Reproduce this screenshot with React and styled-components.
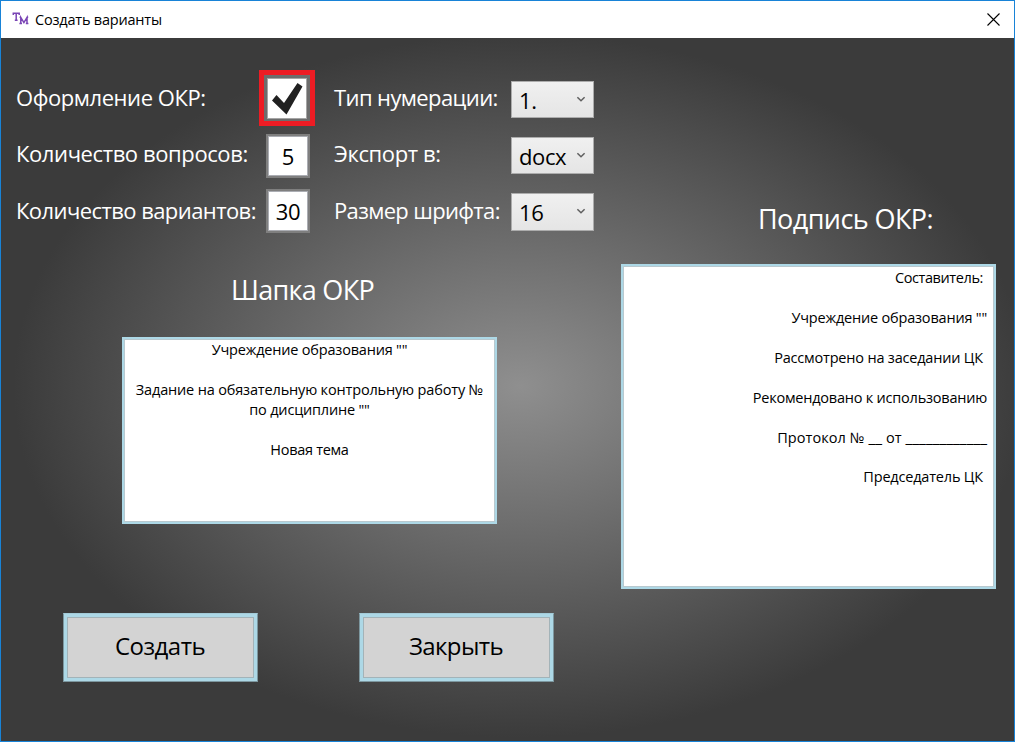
import React from 'react';
import styled, { createGlobalStyle } from 'styled-components';

const GlobalStyle = createGlobalStyle`
  * { box-sizing: border-box; }
  body { margin: 0; font-family: "Open Sans", "Noto Sans", sans-serif; color: #000; }
`;

const Window = styled.div`
  display: flex;
  flex-direction: column;
  width: 1015px;
  height: 742px;
  border: 1px solid #1883d7;
  overflow: hidden;
`;

const TitleBar = styled.header`
  display: flex;
  align-items: center;
  flex: 0 0 37px;
  padding: 0 14px 0 11px;
  background: #fff;
`;

const Title = styled.span`
  flex: 1;
  margin-left: 6px;
  font-size: 14.5px;
  line-height: 20px;
  letter-spacing: -0.2px;
  white-space: nowrap;
`;

const Logo = styled.svg`
  display: block;
  margin-top: -3px;
`;

const Body = styled.main`
  display: flex;
  flex: 1;
  background: radial-gradient(50% 50% at 51.2% 49.5%, #8f8f8f 0%, #3b3b3b 100%);
`;

const LeftPane = styled.div`
  display: flex;
  flex-direction: column;
  width: 620px;
  padding-top: 32px;
`;

const RightPane = styled.div`
  display: flex;
  flex-direction: column;
  padding-top: 162px;
`;

const Settings = styled.div`
  display: grid;
  grid-template-columns: 243px 75px 177px 83px;
  grid-template-rows: 57px 56px 56px;
  padding-left: 15px;
`;

const Label = styled.label`
  padding-top: ${(p) => p.$top}px;
  font-size: 22px;
  line-height: 30px;
  color: #fff;
  white-space: nowrap;
  letter-spacing: ${(p) => p.$track}px;
`;

const CheckFrame = styled.div`
  width: 56px;
  height: 56px;
  border: 5px solid #ed1c24;
  background: #6d6d6d;
`;

const CheckBox = styled.div`
  width: 40px;
  height: 41px;
  margin: 3px 0 0 3px;
  border: 1px solid #a5a5a5;
  background: #fff;
`;

const NumberBox = styled.div`
  width: 44px;
  height: 44px;
  margin: ${(p) => p.$top}px 0 0 7px;
  border: 2px solid #7f7f7f;
  box-shadow: inset 0 0 0 1px #abadb3;
  background: #fff;
  font-size: 22px;
  line-height: 40px;
  text-align: center;
  letter-spacing: -0.3px;
`;

const Select = styled.div`
  display: flex;
  justify-content: space-between;
  width: 83px;
  height: ${(p) => p.$height || 37}px;
  margin-top: ${(p) => p.$top}px;
  padding: 3px 7px 0 7px;
  border: 1px solid #acacac;
  background: linear-gradient(#f0f0f0, #e5e5e5);
  font-size: 22px;
  line-height: 30px;
  letter-spacing: -0.4px;
`;

const Chevron = styled.svg`
  display: block;
  margin-top: 11px;
`;

const Heading = styled.h2`
  margin: ${(p) => p.$top || 0}px 0 0 ${(p) => p.$left}px;
  font-size: 27px;
  font-weight: 400;
  line-height: 38px;
  color: #fff;
  white-space: nowrap;
  letter-spacing: ${(p) => p.$track}px;
`;

const TextPanel = styled.div`
  width: 375px;
  height: ${(p) => p.$height}px;
  margin: ${(p) => p.$top}px 0 0 ${(p) => p.$left}px;
  padding: ${(p) => p.$inset}px 7px 0;
  border: 2px solid #add8e6;
  box-shadow: inset 0 0 0 1px #b9c9cf;
  background: #fff;
  text-align: ${(p) => p.$align};
`;

const Line = styled.p`
  height: ${(p) => p.$height || 20}px;
  margin: 0 ${(p) => p.$end || 0}px 0 0;
  font-size: 14.5px;
  line-height: 20px;
  white-space: nowrap;
  letter-spacing: ${(p) => p.$track ?? -0.19}px;
`;

const Blank = styled.span`
  font-size: 15.5px;
  line-height: 1;
  letter-spacing: 0;
`;

const Actions = styled.div`
  display: flex;
  gap: 101px;
  margin: 89px 0 0 62px;
`;

const Button = styled.button`
  width: 195px;
  height: 69px;
  padding: 0 1px 5px 0;
  border: 1px solid #7d979f;
  border-top-color: #a3cbd8;
  box-shadow: inset 0 0 0 3px #add8e6, inset 0 0 0 4px #a3b3b8;
  background: #d3d3d3;
  font-family: inherit;
  font-size: 24px;
  letter-spacing: ${(p) => p.$track}px;
`;

const Arrow = () => (
  <Chevron width="10" height="7" viewBox="0 0 10 7">
    <path d="M1.4 1.2 L5 4.8 L8.6 1.2" fill="none" stroke="#606060" strokeWidth="1.5" />
  </Chevron>
);

export default function App() {
  return (
    <>
      <GlobalStyle />
      <Window>
        <TitleBar>
          <Logo width="17" height="14" viewBox="0 0 17 14">
            <g fill="none" stroke="#7a45b5" strokeWidth="1.5">
              <path d="M1.3 4V2.2H7.2V4M4.2 2V9M2.8 9.3H5.6" />
              <path d="M7.4 12.6H10M8.8 12.6V6.4L11.9 11.6L15 6.4V12.6M13.8 12.6H16.4M7.6 6.2H9.2M14.6 6.2H16.2" />
            </g>
          </Logo>
          <Title>Создать варианты</Title>
          <svg width="13" height="13" viewBox="0 0 13 13">
            <path d="M0.5 0.5L12.5 12.5M12.5 0.5L0.5 12.5" stroke="#000" strokeWidth="1.1" />
          </svg>
        </TitleBar>
        <Body>
          <LeftPane>
            <Settings>
              <Label $top={12} $track={-0.43}>Оформление ОКР:</Label>
              <CheckFrame>
                <CheckBox>
                  <svg width="38" height="39" viewBox="0 0 38 39">
                    <path d="M4 21.5L8.5 16L16 24L29.5 4L34.5 7.5L18.5 35.5Z" fill="#212121" />
                  </svg>
                </CheckBox>
              </CheckFrame>
              <Label $top={12} $track={-0.6}>Тип нумерации:</Label>
              <Select $top={11}>1.<Arrow /></Select>

              <Label $top={11} $track={-0.4}>Количество вопросов:</Label>
              <NumberBox $top={7}>5</NumberBox>
              <Label $top={11} $track={-0.4}>Экспорт в:</Label>
              <Select $top={10}>docx<Arrow /></Select>

              <Label $top={12} $track={-0.57}>Количество вариантов:</Label>
              <NumberBox $top={6}>30</NumberBox>
              <Label $top={12} $track={-0.65}>Размер шрифта:</Label>
              <Select $top={10} $height={38}>16<Arrow /></Select>
            </Settings>
            <Heading $top={32} $left={230} $track={-0.7}>Шапка ОКР</Heading>
            <TextPanel $height={187} $top={28} $left={121} $inset={1} $align="center">
              <Line>Учреждение образования ""</Line>
              <Line />
              <Line $track={-0.16}>Задание на обязательную контрольную работу №</Line>
              <Line>по дисциплине ""</Line>
              <Line />
              <Line $track={-0.3}>Новая тема</Line>
            </TextPanel>
            <Actions>
              <Button $track={-0.5}>Создать</Button>
              <Button $track={-0.6}>Закрыть</Button>
            </Actions>
          </LeftPane>
          <RightPane>
            <Heading $left={137} $track={-0.58}>Подпись ОКР:</Heading>
            <TextPanel $height={325} $top={26} $left={0} $inset={2} $align="right">
              <Line $end={4} $track={-0.4}>Составитель:</Line>
              <Line />
              <Line>Учреждение образования ""</Line>
              <Line />
              <Line $end={4}>Рассмотрено на заседании ЦК</Line>
              <Line />
              <Line $track={-0.22}>Рекомендовано к использованию</Line>
              <Line />
              <Line $track={0.08}>Протокол № <Blank>__</Blank> от <Blank>____________</Blank></Line>
              <Line $height={19} />
              <Line $end={4}>Председатель ЦК</Line>
            </TextPanel>
          </RightPane>
        </Body>
      </Window>
    </>
  );
}
